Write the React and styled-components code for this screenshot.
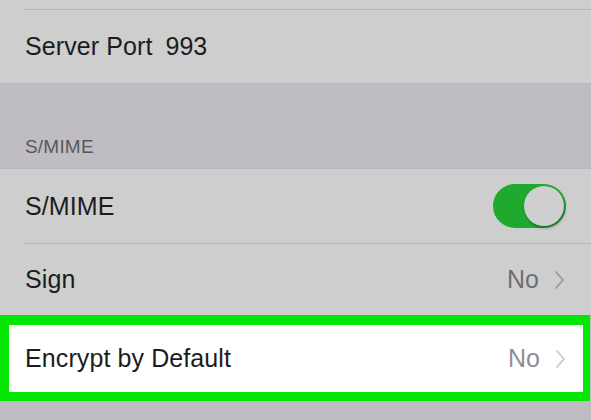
import React from 'react'
import styled, { createGlobalStyle } from 'styled-components'

const GlobalStyle = createGlobalStyle`
  html, body {
    margin: 0;
    padding: 0;
    background: #bfbdc2;
  }
  body {
    font-family: "Helvetica Neue", "Liberation Sans", Arial, sans-serif;
    -webkit-font-smoothing: antialiased;
  }
`

const Screen = styled.div`
  width: 591px;
  height: 420px;
  overflow: hidden;
  background: #bfbdc2;
  display: flex;
  flex-direction: column;
`

const Group = styled.div`
  flex-shrink: 0;
  background: #cecece;
  border-top: ${props => (props.topLine ? '1px solid #b9b8bb' : 'none')};
  border-bottom: ${props => (props.bottomLine ? '1px solid #b9b8bb' : 'none')};
  display: flex;
  flex-direction: column;
`

const Row = styled.div`
  flex-shrink: 0;
  height: ${props => props.h}px;
  display: flex;
  align-items: center;
  padding: 0 26px 0 25px;
  box-sizing: border-box;
  font-size: 25px;
  color: #1c1c1c;
`

const Separator = styled.div`
  flex-shrink: 0;
  height: 1px;
  margin-left: 24px;
  background: #b6b6b8;
`

const Label = styled.span`
  letter-spacing: 0.1px;
`

const InlineValue = styled.span`
  margin-left: 13px;
  color: #1c1c1c;
`

const Spacer = styled.div`
  flex: 1;
`

const Detail = styled.span`
  color: ${props => (props.bright ? '#8e8e93' : '#6e6e70')};
  margin-right: 15px;
`

const SectionHeader = styled.div`
  flex-shrink: 0;
  height: 84px;
  display: flex;
  align-items: flex-end;
  padding: 0 0 10px 25px;
  box-sizing: border-box;
  font-size: 19px;
  color: #58585c;
  letter-spacing: 0.2px;
`

const Highlight = styled.div`
  flex-shrink: 0;
  height: 86px;
  width: 590px;
  box-sizing: border-box;
  border-style: solid;
  border-color: #04e604;
  border-width: 10px 7px 9px 9px;
  background: #ffffff;
  display: flex;
  align-items: center;
  padding: 0 17px 0 16px;
  font-size: 25px;
  color: #1c1c1c;
`

const Toggle = styled.div`
  width: 73px;
  height: 44px;
  border-radius: 22px;
  background: #1faa2f;
  position: relative;
  margin-right: -1px;
`

const Knob = styled.div`
  position: absolute;
  top: 2px;
  right: 2px;
  width: 40px;
  height: 40px;
  border-radius: 50%;
  background: #cfcfcf;
  box-shadow: 1px 2px 3px rgba(0, 0, 0, 0.35);
`

function Chevron({ color }) {
  return (
    <svg width="11" height="20" viewBox="0 0 11 20">
      <path d="M1.5 1.5 L9 10 L1.5 18.5" fill="none" stroke={color} strokeWidth="1.8" />
    </svg>
  )
}

export default function App() {
  return (
    <>
      <GlobalStyle />
      <Screen>
        <Group bottomLine>
          <Row h={9} />
          <Separator />
          <Row h={73}>
            <Label>Server Port</Label>
            <InlineValue>993</InlineValue>
          </Row>
        </Group>
        <SectionHeader>S/MIME</SectionHeader>
        <Group topLine>
          <Row h={74}>
            <Label>S/MIME</Label>
            <Spacer />
            <Toggle>
              <Knob />
            </Toggle>
          </Row>
          <Separator />
          <Row h={71}>
            <Label>Sign</Label>
            <Spacer />
            <Detail>No</Detail>
            <Chevron color="#9b9b9d" />
          </Row>
        </Group>
        <Highlight>
          <Label>Encrypt by Default</Label>
          <Spacer />
          <Detail bright>No</Detail>
          <Chevron color="#c7c7cc" />
        </Highlight>
      </Screen>
    </>
  )
}
